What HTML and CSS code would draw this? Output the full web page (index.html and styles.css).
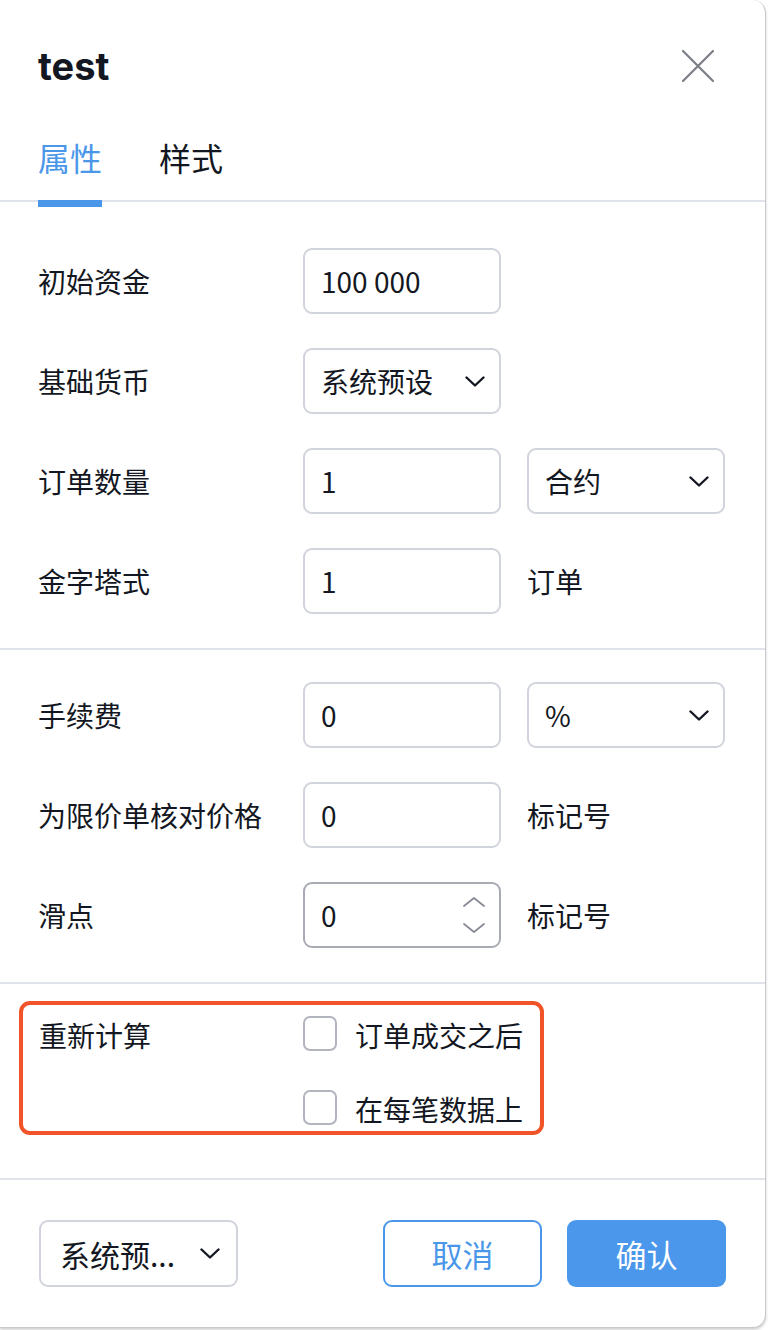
FILE: index.html
```html
<!DOCTYPE html>
<html lang="zh-CN">
<head>
<meta charset="utf-8">
<title>test</title>
<link rel="stylesheet" href="styles.css">
</head>
<body>
<div class="dialog">
  <header class="head">
    <h1 class="title">test</h1>
    <button class="close" aria-label="关闭">
      <svg width="34" height="34" viewBox="0 0 34 34"><path d="M2 2 L32 32 M32 2 L2 32" stroke="#7b7e87" stroke-width="2.2" fill="none" stroke-linecap="round"/></svg>
    </button>
  </header>
  <nav class="tabs">
    <div class="tab active">属性</div>
    <div class="tab">样式</div>
  </nav>

  <section class="sec sec-first">
    <div class="row">
      <div class="label">初始资金</div>
      <div class="field">100 000</div>
    </div>
    <div class="row">
      <div class="label">基础货币</div>
      <div class="field select">系统预设<svg class="chev" viewBox="0 0 20 11"><polyline points="1.5,1.5 10,9.5 18.5,1.5" /></svg></div>
    </div>
    <div class="row">
      <div class="label">订单数量</div>
      <div class="field">1</div>
      <div class="field select">合约<svg class="chev" viewBox="0 0 20 11"><polyline points="1.5,1.5 10,9.5 18.5,1.5" /></svg></div>
    </div>
    <div class="row">
      <div class="label">金字塔式</div>
      <div class="field">1</div>
      <div class="unit">订单</div>
    </div>
  </section>

  <section class="sec sec-second">
    <div class="row">
      <div class="label">手续费</div>
      <div class="field">0</div>
      <div class="field select">%<svg class="chev" viewBox="0 0 20 11"><polyline points="1.5,1.5 10,9.5 18.5,1.5" /></svg></div>
    </div>
    <div class="row">
      <div class="label">为限价单核对价格</div>
      <div class="field">0</div>
      <div class="unit">标记号</div>
    </div>
    <div class="row">
      <div class="label">滑点</div>
      <div class="field spin">0
        <span class="spinners">
          <svg viewBox="0 0 22 10"><polyline points="1,9 11,1 21,9" /></svg>
          <svg viewBox="0 0 22 10"><polyline points="1,1 11,9 21,1" /></svg>
        </span>
      </div>
      <div class="unit">标记号</div>
    </div>
  </section>

  <section class="sec sec-recalc">
    <div class="group">
      <div class="label glabel">重新计算</div>
      <div class="checks">
        <label class="check"><span class="box"></span><span class="ctext">订单成交之后</span></label>
        <label class="check"><span class="box"></span><span class="ctext">在每笔数据上</span></label>
      </div>
    </div>
  </section>

  <footer class="foot">
    <div class="field select preset">系统预...<svg class="chev" viewBox="0 0 20 11"><polyline points="1.5,1.5 10,9.5 18.5,1.5" /></svg></div>
    <div class="actions">
      <button class="btn btn-cancel">取消</button>
      <button class="btn btn-ok">确认</button>
    </div>
  </footer>
</div>
</body>
</html>
```

FILE: styles.css
```css
* { box-sizing: border-box; }

html, body {
  margin: 0;
  padding: 0;
  background: #ffffff;
}

body {
  font-family: "Noto Sans CJK SC", "Noto Sans", sans-serif;
  color: #131722;
  width: 768px;
  height: 1330px;
  overflow: hidden;
}

.dialog {
  width: 766px;
  background: #ffffff;
  border-right: 1px solid #c8c9cc;
  border-bottom: 1px solid #c8c9cc;
  border-radius: 0 13px 13px 0;
  box-shadow: 0 2px 3px rgba(0, 0, 0, 0.18);
}

.head {
  height: 132px;
  padding: 0 50px 0 38px;
  display: flex;
  align-items: center;
  justify-content: space-between;
}

.title {
  margin: 0;
  font-family: Inter, "Noto Sans", sans-serif;
  font-weight: 700;
  font-size: 38px;
  line-height: 44px;
  letter-spacing: 0;
  color: #131722;
}

.close {
  border: 0;
  background: none;
  padding: 0;
  width: 34px;
  height: 34px;
  display: flex;
}

.tabs {
  display: flex;
  gap: 57px;
  padding: 3px 38px 0;
  border-bottom: 2px solid #e0e3eb;
}

.tab {
  position: relative;
  font-size: 32px;
  line-height: 44px;
  padding-bottom: 21px;
  color: #131722;
}

.tab.active {
  color: #4a97ea;
}

.tab.active::after {
  content: "";
  position: absolute;
  left: 0;
  right: 0;
  bottom: -7px;
  height: 7px;
  background: #4a97ea;
}

.sec {
  display: flex;
  flex-direction: column;
  gap: 34px;
  padding: 32px 38px 34px;
  border-top: 2px solid #e0e3eb;
}

.sec-first {
  border-top: 0;
  padding-top: 46px;
}

.row {
  display: grid;
  grid-template-columns: 239px 198px 198px;
  column-gap: 26px;
  align-items: center;
  height: 66px;
}

.label {
  font-size: 28px;
  line-height: 36px;
  white-space: nowrap;
}

.field {
  height: 66px;
  border: 2px solid #d1d4dc;
  border-radius: 9px;
  padding: 0 14px 0 16px;
  display: flex;
  align-items: center;
  font-size: 28px;
  color: #131722;
  white-space: nowrap;
}

.select {
  justify-content: space-between;
}

.chev {
  width: 20px;
  height: 11px;
  fill: none;
  stroke: #131722;
  stroke-width: 2.4;
  stroke-linecap: round;
  stroke-linejoin: round;
}

.spin {
  border-color: #a8abb3;
  justify-content: space-between;
  padding-right: 14px;
}

.spinners {
  display: flex;
  flex-direction: column;
  gap: 16px;
}

.spinners svg {
  width: 22px;
  height: 10px;
  fill: none;
  stroke: #868993;
  stroke-width: 1.7;
  stroke-linecap: round;
  stroke-linejoin: round;
}

.unit {
  font-size: 28px;
  line-height: 36px;
}

.sec-recalc {
  padding: 17px 19px 43px;
}

.group {
  width: 525px;
  border: 4px solid #f05428;
  border-radius: 11px;
  padding: 11px 0 6px 16px;
  display: grid;
  grid-template-columns: 264px 1fr;
  align-items: start;
}

.glabel {
  line-height: 37px;
  margin-top: 1px;
}

.checks {
  display: flex;
  flex-direction: column;
  gap: 39px;
}

.check {
  display: flex;
  align-items: center;
  gap: 18px;
  font-size: 28px;
  height: 35px;
  line-height: 35px;
  white-space: nowrap;
}

.ctext {
  padding-top: 3px;
}

.box {
  width: 34px;
  height: 35px;
  border: 2px solid #b2b5be;
  border-radius: 7px;
  flex: none;
}

.foot {
  display: flex;
  justify-content: space-between;
  align-items: center;
  padding: 40px 39px 40px 39px;
  border-top: 2px solid #e0e3eb;
}

.preset {
  width: 199px;
  height: 67px;
  padding-left: 19px;
  padding-right: 16px;
  font-size: 30px;
}

.actions {
  display: flex;
  gap: 25px;
}

.btn {
  width: 159px;
  height: 67px;
  border-radius: 9px;
  font-family: "Noto Sans CJK SC", sans-serif;
  font-size: 31px;
  display: flex;
  align-items: center;
  justify-content: center;
  padding: 0;
}

.btn-cancel {
  background: #ffffff;
  border: 2px solid #4a97ea;
  color: #4a97ea;
}

.btn-ok {
  background: #4a97eb;
  border: 0;
  color: #ffffff;
}
```
